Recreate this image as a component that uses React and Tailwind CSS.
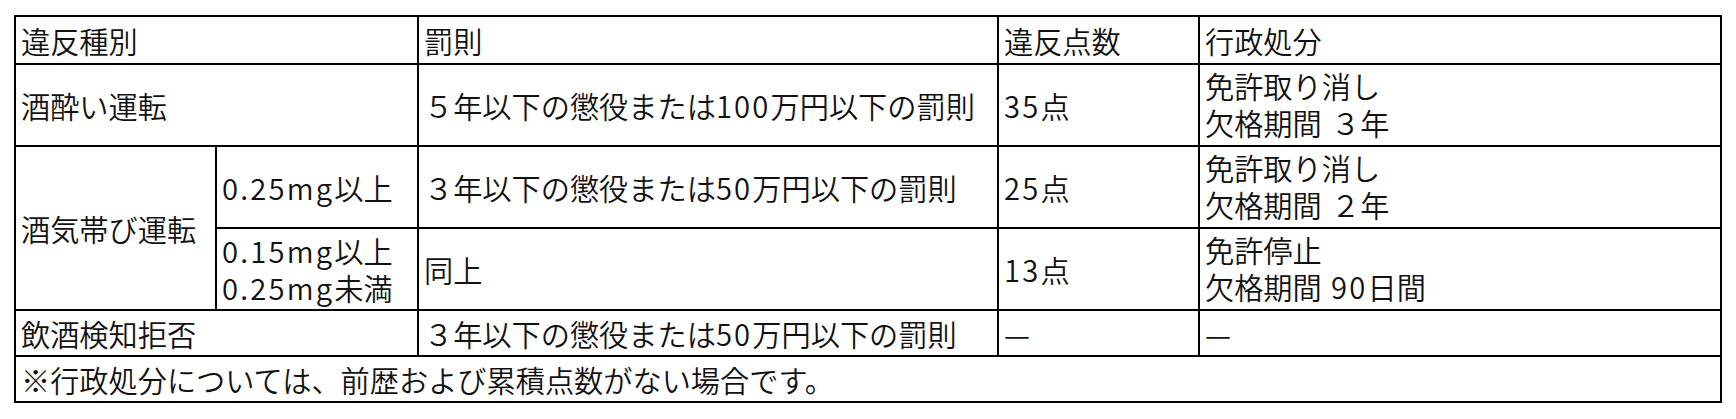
import React from "react";

const cell = "border-2 border-black px-[5px] align-middle";

function D({ children }) {
  return <span className="tracking-[2.2px]">{children}</span>;
}

function S() {
  return <span className="font-['DejaVu_Sans']"> </span>;
}

export default function App() {
  return (
    <div
      className="w-[1736px] h-[419px] bg-white pl-[14px] pt-[15px] text-[#111] text-[29.2px] leading-[37px] font-[350]"
      style={{ fontFamily: '"Noto Sans CJK JP", sans-serif' }}
    >
      <table className="table-fixed border-collapse w-[1708px]">
        <colgroup>
          <col className="w-[201px]" />
          <col className="w-[202px]" />
          <col className="w-[580px]" />
          <col className="w-[201px]" />
          <col className="w-[522px]" />
        </colgroup>
        <tbody>
          <tr className="h-[48px]">
            <td className={cell} colSpan={2}>違反種別</td>
            <td className={cell}>罰則</td>
            <td className={cell}>違反点数</td>
            <td className={cell}>行政処分</td>
          </tr>
          <tr className="h-[82px]">
            <td className={cell} colSpan={2}>酒酔い運転</td>
            <td className={cell}>
              ５年以下の懲役または<D>100</D>万円以下の罰則
            </td>
            <td className={cell}>
              <D>35</D>点
            </td>
            <td className={cell}>
              <div>免許取り消し</div>
              <div>
                欠格期間<S />３年
              </div>
            </td>
          </tr>
          <tr className="h-[82px]">
            <td className={cell} rowSpan={2}>酒気帯び運転</td>
            <td className={cell}>
              <D>0.25mg</D>以上
            </td>
            <td className={cell}>
              ３年以下の懲役または<D>50</D>万円以下の罰則
            </td>
            <td className={cell}>
              <D>25</D>点
            </td>
            <td className={cell}>
              <div>免許取り消し</div>
              <div>
                欠格期間<S />２年
              </div>
            </td>
          </tr>
          <tr className="h-[82px]">
            <td className={cell}>
              <div>
                <D>0.15mg</D>以上
              </div>
              <div>
                <D>0.25mg</D>未満
              </div>
            </td>
            <td className={cell}>同上</td>
            <td className={cell}>
              <D>13</D>点
            </td>
            <td className={cell}>
              <div>免許停止</div>
              <div>
                欠格期間<S />
                <D>90</D>日間
              </div>
            </td>
          </tr>
          <tr className="h-[46px]">
            <td className={cell} colSpan={2}>飲酒検知拒否</td>
            <td className={cell}>
              ３年以下の懲役または<D>50</D>万円以下の罰則
            </td>
            <td className={cell}>—</td>
            <td className={cell}>—</td>
          </tr>
          <tr className="h-[46px]">
            <td className={cell} colSpan={5}>
              ※行政処分については、前歴および累積点数がない場合です。
            </td>
          </tr>
        </tbody>
      </table>
    </div>
  );
}
